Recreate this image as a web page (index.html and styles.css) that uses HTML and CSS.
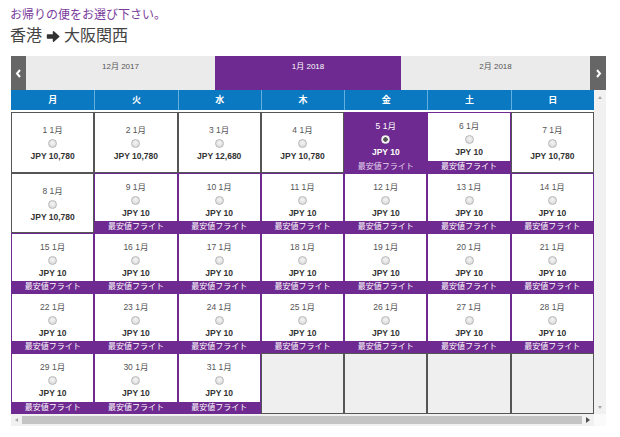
FILE: index.html
```html
<!DOCTYPE html>
<html lang="ja">
<head>
<meta charset="utf-8">
<link rel="stylesheet" href="styles.css">
</head>
<body>
<div class="page">
  <div class="subtitle">お帰りの便をお選び下さい。</div>
  <div class="route">香港 <svg class="arrow" width="14" height="13" viewBox="0 0 14 13"><path d="M1.5 5H7.5V1.8L12.8 6.5L7.5 11.2V8H1.5Z" fill="#333" stroke="#333" stroke-width="1.4" stroke-linejoin="round"/></svg> 大阪関西</div>

  <div class="nav">
    <div class="nav-btn"><svg width="7" height="9" viewBox="0 0 7 9"><polyline points="5,1 2,4.5 5,8" fill="none" stroke="#fff" stroke-width="2"/></svg></div>
    <div class="tab tab-w1">12月 2017</div>
    <div class="tab tab-active">1月 2018</div>
    <div class="tab tab-w1">2月 2018</div>
    <div class="nav-btn nav-btn-r"><svg width="7" height="9" viewBox="0 0 7 9"><polyline points="2,1 5,4.5 2,8" fill="none" stroke="#fff" stroke-width="2"/></svg></div>
  </div>

  <div class="frame">
    <div class="main">
      <div class="week">
        <div class="wd">月</div><div class="wd">火</div><div class="wd">水</div><div class="wd">木</div><div class="wd">金</div><div class="wd">土</div><div class="wd">日</div>
      </div>
      <div class="grid">
        <div class="cell"><div class="d">1 1月</div><div class="r"><span class="radio"></span></div><div class="p">JPY 10,780</div></div>
        <div class="cell"><div class="d">2 1月</div><div class="r"><span class="radio"></span></div><div class="p">JPY 10,780</div></div>
        <div class="cell"><div class="d">3 1月</div><div class="r"><span class="radio"></span></div><div class="p">JPY 12,680</div></div>
        <div class="cell"><div class="d">4 1月</div><div class="r"><span class="radio"></span></div><div class="p">JPY 10,780</div></div>
        <div class="cell cheap sel"><div class="d">5 1月</div><div class="r"><span class="radio on"></span></div><div class="p">JPY 10</div><div class="lab">最安値フライト</div></div>
        <div class="cell cheap"><div class="d">6 1月</div><div class="r"><span class="radio"></span></div><div class="p">JPY 10</div><div class="lab">最安値フライト</div></div>
        <div class="cell"><div class="d">7 1月</div><div class="r"><span class="radio"></span></div><div class="p">JPY 10,780</div></div>

        <div class="cell"><div class="d">8 1月</div><div class="r"><span class="radio"></span></div><div class="p">JPY 10,780</div></div>
        <div class="cell cheap"><div class="d">9 1月</div><div class="r"><span class="radio"></span></div><div class="p">JPY 10</div><div class="lab">最安値フライト</div></div>
        <div class="cell cheap"><div class="d">10 1月</div><div class="r"><span class="radio"></span></div><div class="p">JPY 10</div><div class="lab">最安値フライト</div></div>
        <div class="cell cheap"><div class="d">11 1月</div><div class="r"><span class="radio"></span></div><div class="p">JPY 10</div><div class="lab">最安値フライト</div></div>
        <div class="cell cheap"><div class="d">12 1月</div><div class="r"><span class="radio"></span></div><div class="p">JPY 10</div><div class="lab">最安値フライト</div></div>
        <div class="cell cheap"><div class="d">13 1月</div><div class="r"><span class="radio"></span></div><div class="p">JPY 10</div><div class="lab">最安値フライト</div></div>
        <div class="cell cheap"><div class="d">14 1月</div><div class="r"><span class="radio"></span></div><div class="p">JPY 10</div><div class="lab">最安値フライト</div></div>

        <div class="cell cheap"><div class="d">15 1月</div><div class="r"><span class="radio"></span></div><div class="p">JPY 10</div><div class="lab">最安値フライト</div></div>
        <div class="cell cheap"><div class="d">16 1月</div><div class="r"><span class="radio"></span></div><div class="p">JPY 10</div><div class="lab">最安値フライト</div></div>
        <div class="cell cheap"><div class="d">17 1月</div><div class="r"><span class="radio"></span></div><div class="p">JPY 10</div><div class="lab">最安値フライト</div></div>
        <div class="cell cheap"><div class="d">18 1月</div><div class="r"><span class="radio"></span></div><div class="p">JPY 10</div><div class="lab">最安値フライト</div></div>
        <div class="cell cheap"><div class="d">19 1月</div><div class="r"><span class="radio"></span></div><div class="p">JPY 10</div><div class="lab">最安値フライト</div></div>
        <div class="cell cheap"><div class="d">20 1月</div><div class="r"><span class="radio"></span></div><div class="p">JPY 10</div><div class="lab">最安値フライト</div></div>
        <div class="cell cheap"><div class="d">21 1月</div><div class="r"><span class="radio"></span></div><div class="p">JPY 10</div><div class="lab">最安値フライト</div></div>

        <div class="cell cheap"><div class="d">22 1月</div><div class="r"><span class="radio"></span></div><div class="p">JPY 10</div><div class="lab">最安値フライト</div></div>
        <div class="cell cheap"><div class="d">23 1月</div><div class="r"><span class="radio"></span></div><div class="p">JPY 10</div><div class="lab">最安値フライト</div></div>
        <div class="cell cheap"><div class="d">24 1月</div><div class="r"><span class="radio"></span></div><div class="p">JPY 10</div><div class="lab">最安値フライト</div></div>
        <div class="cell cheap"><div class="d">25 1月</div><div class="r"><span class="radio"></span></div><div class="p">JPY 10</div><div class="lab">最安値フライト</div></div>
        <div class="cell cheap"><div class="d">26 1月</div><div class="r"><span class="radio"></span></div><div class="p">JPY 10</div><div class="lab">最安値フライト</div></div>
        <div class="cell cheap"><div class="d">27 1月</div><div class="r"><span class="radio"></span></div><div class="p">JPY 10</div><div class="lab">最安値フライト</div></div>
        <div class="cell cheap"><div class="d">28 1月</div><div class="r"><span class="radio"></span></div><div class="p">JPY 10</div><div class="lab">最安値フライト</div></div>

        <div class="cell cheap"><div class="d">29 1月</div><div class="r"><span class="radio"></span></div><div class="p">JPY 10</div><div class="lab">最安値フライト</div></div>
        <div class="cell cheap"><div class="d">30 1月</div><div class="r"><span class="radio"></span></div><div class="p">JPY 10</div><div class="lab">最安値フライト</div></div>
        <div class="cell cheap"><div class="d">31 1月</div><div class="r"><span class="radio"></span></div><div class="p">JPY 10</div><div class="lab">最安値フライト</div></div>
        <div class="cell empty"></div>
        <div class="cell empty"></div>
        <div class="cell empty"></div>
        <div class="cell empty"></div>
      </div>
    </div>
    <div class="vscroll">
      <span class="tri tri-up"></span>
      <span class="tri tri-down"></span>
    </div>
    <div class="hscroll">
      <span class="tri tri-left"></span>
      <span class="thumb"></span>
      <span class="tri tri-right"></span>
    </div>
    <div class="corner"></div>
  </div>
</div>
</body>
</html>
```
FILE: styles.css
```css
html, body {
  margin: 0;
  padding: 0;
  background: #fff;
}
body {
  font-family: "Liberation Sans", "Noto Sans CJK JP", sans-serif;
  color: #444;
}
.page {
  padding: 8px 0 0 10px;
}
.subtitle {
  font-size: 12px;
  line-height: 15px;
  color: #7a3b9c;
}
.route {
  margin-top: 3px;
  font-size: 16px;
  line-height: 20px;
  color: #444;
  display: flex;
  align-items: center;
  gap: 4px;
}
.arrow {
  display: block;
}
.nav {
  margin: 10px 0 0 1px;
  display: flex;
  height: 34px;
  width: 595px;
}
.nav-btn {
  width: 15px;
  background: #666;
  display: flex;
  align-items: center;
  justify-content: center;
}
.nav-btn-r {
  width: 16px;
}
.tab {
  width: 186px;
  background: #ebebeb;
  color: #555;
  font-size: 8px;
  line-height: 12px;
  padding-top: 5px;
  text-align: center;
  box-sizing: border-box;
}
.tab-w1 {
  width: 189px;
}
.tab-active {
  background: #6e2a90;
  color: #fff;
}
.frame {
  margin-left: 1px;
  width: 595px;
  display: grid;
  grid-template-columns: 583px 12px;
  grid-template-rows: 324px 12px;
}
.main {
  overflow: hidden;
}
.week {
  display: grid;
  grid-template-columns: repeat(7, 1fr);
  height: 20px;
  background: #0a79c1;
  margin-bottom: 2px;
}
.wd {
  color: #fff;
  font-weight: bold;
  font-size: 9px;
  line-height: 20px;
  text-align: center;
  border-left: 1px solid #63aedd;
}
.wd:first-child {
  border-left: none;
}
.grid {
  display: grid;
  grid-template-columns: repeat(7, 1fr);
  grid-template-rows: 61px 60px 60px 60px 61px;
}
.cell {
  box-sizing: border-box;
  border: 1px solid #555;
  background: #fff;
  display: flex;
  flex-direction: column;
  align-items: center;
  padding-top: 11px;
}
.d {
  font-size: 8.5px;
  line-height: 13px;
  color: #555;
}
.r {
  height: 13px;
  display: flex;
  align-items: center;
  justify-content: center;
}
.radio {
  display: block;
  width: 9px;
  height: 9px;
  box-sizing: border-box;
  border-radius: 50%;
  border: 1px solid #b8b8b8;
  background: radial-gradient(circle at 50% 40%, #f5f5f5, #d4d4d4);
}
.radio.on {
  background: radial-gradient(circle, #555 0 2px, #fff 2.5px);
  border-color: #ddd;
}
.p {
  font-size: 8.5px;
  line-height: 13px;
  font-weight: bold;
  color: #333;
}
.cheap {
  border-color: #6e2a90;
  padding-top: 7px;
}
.lab {
  margin-top: auto;
  align-self: stretch;
  background: #6e2a90;
  color: #fff;
  font-size: 8px;
  line-height: 11px;
  height: 11px;
  text-align: center;
}
.sel {
  background: #6e2a90;
}
.sel .d, .sel .p {
  color: #fff;
}
.sel .lab {
  color: #e6d6ef;
}
.empty {
  background: #efefef;
}
.vscroll {
  background: #f1f1f1;
  position: relative;
}
.hscroll {
  background: #f1f1f1;
  position: relative;
  display: flex;
  align-items: center;
}
.corner {
  background: #fafafa;
}
.thumb {
  position: absolute;
  left: 11px;
  right: 12px;
  top: 2px;
  bottom: 2px;
  background: #c4c4c4;
}
.tri {
  position: absolute;
  width: 0;
  height: 0;
}
.tri-up {
  left: 4px;
  top: 6px;
  border-left: 2px solid transparent;
  border-right: 2px solid transparent;
  border-bottom: 3px solid #a8a8a8;
}
.tri-down {
  left: 4px;
  bottom: 5px;
  border-left: 2px solid transparent;
  border-right: 2px solid transparent;
  border-top: 3px solid #a8a8a8;
}
.tri-left {
  left: 4px;
  top: 4px;
  border-top: 2px solid transparent;
  border-bottom: 2px solid transparent;
  border-right: 3px solid #a8a8a8;
}
.tri-right {
  right: 4px;
  top: 3px;
  border-top: 3px solid transparent;
  border-bottom: 3px solid transparent;
  border-left: 4px solid #505050;
}
```
